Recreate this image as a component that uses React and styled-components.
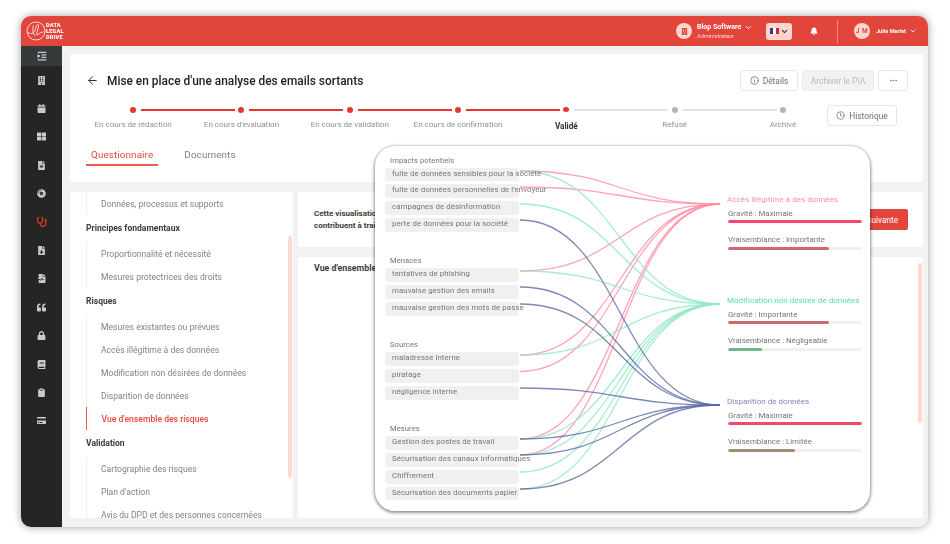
import React from 'react';
import styled, { createGlobalStyle } from 'styled-components';
import { ArrowLeft, ChevronDown, Info, Clock, MoreHorizontal } from 'lucide-react';
import {
  FaIndent, FaBuilding, FaCalendar, FaThLarge, FaFileAlt, FaCompactDisc, FaStethoscope,
  FaFileDownload, FaFileMedicalAlt, FaQuoteLeft, FaLock, FaBook, FaClipboard, FaCreditCard, FaBell,
} from 'react-icons/fa';

const Global = createGlobalStyle`
  html, body { margin: 0; padding: 0; background: #fff; }
  body { width: 950px; height: 544px; overflow: hidden; font-family: Roboto, "Liberation Sans", sans-serif; }
  * { box-sizing: border-box; }
`;

const Stage = styled.div`
  width: 950px; height: 544px; padding: 16px 22px 17px 21px; position: relative; filter: blur(0.35px);
`;
const Frame = styled.div`
  width: 907px; height: 511px; border-radius: 10px; overflow: hidden; display: flex; flex-direction: column;
  box-shadow: 0 0 9px rgba(0,0,0,.38); background: #f2f2f2;
`;
const Header = styled.header`
  height: 30px; flex: none; background: #e2453b; display: flex; align-items: center; padding: 0 11px 0 5px; color: #fff;
`;
const Logo = styled.div`display: flex; align-items: center;`;
const LogoText = styled.div`font-size: 5.6px; font-weight: 900; line-height: 6.2px; letter-spacing: .2px;`;
const HeadRight = styled.div`margin-left: auto; display: flex; align-items: center;`;
const Round = styled.div`
  width: 16px; height: 16px; border-radius: 50%; background: #ffd6cd; color: #e2453b; display: flex; align-items: center; justify-content: center;
  font-size: 6.5px; font-weight: 700; letter-spacing: .6px;
`;
const Org = styled.div`margin-left: 5px; width: 57px;`;
const OrgName = styled.div`font-size: 7px; font-weight: 700; display: flex; align-items: center; gap: 3px; line-height: 9px; white-space: nowrap;`;
const OrgRole = styled.div`font-size: 5.6px; line-height: 8px; color: #ffd6cd; white-space: nowrap;`;
const FlagBtn = styled.div`
  margin-left: 12px; width: 26px; height: 17px; border-radius: 3px; background: #ffd6cd; color: #333; display: flex; align-items: center; justify-content: center; gap: 1px;
`;
const BellBox = styled.div`margin-left: 18px; width: 10px; display: flex;`;
const Divider = styled.div`margin: 0 16px 0 17px; width: 1px; height: 23px; background: rgba(255,255,255,.35);`;
const UserName = styled.div`margin-left: 6px; font-size: 5.6px; font-weight: 700; display: flex; align-items: center; gap: 3px; white-space: nowrap;`;

const Body = styled.div`flex: 1; display: flex; min-height: 0;`;
const Side = styled.nav`width: 41px; flex: none; background: #252525; display: flex; flex-direction: column; align-items: stretch;`;
const SideTop = styled.div`height: 20px; background: #353a3a; color: #c7cace; display: flex; align-items: center; justify-content: center;`;
const SideItem = styled.div`
  height: 28.4px; display: flex; align-items: center; justify-content: center; color: ${p => (p.$active ? '#e2332c' : '#c7cace')};
`;

const Main = styled.main`flex: 1; min-width: 0; padding: 8px 5px 9px 8px; display: flex; flex-direction: column; gap: 10px;`;
const Card = styled.section`background: #fff; border-radius: 2px; position: relative;`;
const TopCard = styled(Card)`height: 128px; flex: none; padding: 16px 15px 0 16px; display: flex; flex-direction: column;`;
const TitleRow = styled.div`display: flex; align-items: center; height: 21px;`;
const Back = styled.div`width: 21px; color: #2e2e2e; display: flex;`;
const Title = styled.h1`margin: 0; font-size: 11.9px; font-weight: 500; color: #222; white-space: nowrap;`;
const Actions = styled.div`margin-left: auto; display: flex; gap: 4px;`;
const Btn = styled.div`
  height: 21px; border: 1px solid ${p => (p.$disabled ? '#ececec' : '#e6e6e6')}; border-radius: 3px; background: ${p => (p.$disabled ? '#f2f2f2' : '#fff')};
  color: ${p => (p.$disabled ? '#b9b9b9' : '#6e6e6e')}; font-size: 8.4px; font-weight: 400; display: flex; align-items: center; justify-content: center; gap: 4px; width: ${p => p.$w}px;
`;
const StepRow = styled.div`display: flex; align-items: flex-start; margin: 10px 0 0 -7px; height: 38px;`;
const Steps = styled.div`display: grid; grid-template-columns: repeat(7, 108.3px); width: 758px;`;
const Step = styled.div`display: flex; flex-direction: column; align-items: center; position: relative; height: 30px; padding-top: 6px;`;
const Dot = styled.div`width: 6px; height: 6px; border-radius: 50%; background: ${p => (p.$on ? '#e8352d' : '#b5b5b5')};`;
const Line = styled.div`
  position: absolute; left: calc(50% + 8px); top: 8px; width: 94px; height: 2px; background: ${p => (p.$on ? '#e8352d' : '#e4e4e4')};
`;
const StepLabel = styled.div`
  margin-top: ${p => (p.$cur ? 9 : 7)}px; font-size: ${p => (p.$cur ? 8.2 : 8)}px; font-weight: ${p => (p.$cur ? 700 : 400)}; color: ${p => (p.$cur ? '#333' : '#909090')}; white-space: nowrap;
`;
const HistoryBox = styled.div`margin: 4px 0 0 -10px;`;
const Tabs = styled.div`display: flex; margin-top: 6px; gap: 21px;`;
const Tab = styled.div`
  font-size: 9.9px; height: 21px; padding: 3.5px 5px 0; border-bottom: 2px solid ${p => (p.$on ? '#ee5a50' : 'transparent')}; color: ${p => (p.$on ? '#e8473c' : '#808080')}; letter-spacing: .1px;
`;

const Lower = styled.div`flex: 1; min-height: 0; display: flex; gap: 5px;`;
const NavCard = styled(Card)`width: 223px; flex: none; overflow: hidden; padding: 0 0 0 16px;`;
const NavGroup = styled.div`border-left: 1px solid #efefef; display: flex; flex-direction: column;`;
const NavItem = styled.div`
  height: 23px; display: flex; align-items: center; font-size: 8.6px; padding-left: ${p => (p.$on ? 14.5 : 14)}px; white-space: nowrap;
  color: ${p => (p.$on ? '#e8473c' : '#828282')}; font-weight: ${p => (p.$on ? 500 : 400)};
  ${p => p.$on && 'border-left: 1.5px solid #ee5a50; margin-left: -1px;'}
`;
const NavHead = styled.div`height: 25px; margin-bottom: 2.2px; display: flex; align-items: center; font-size: 8.55px; font-weight: 700; color: #3c3c3c;`;
const Scroll = styled.div`
  position: absolute; width: 4px; border-radius: 2px; background: #ffd9d0; right: ${p => p.$r}px; top: ${p => p.$t}px; height: ${p => p.$h}px;
`;
const RightCol = styled.div`flex: 1; display: flex; flex-direction: column; gap: 10px; min-width: 0;`;
const InfoCard = styled(Card)`height: 55px; flex: none; display: flex; align-items: center; padding: 0 15px 0 16px;`;
const InfoText = styled.div`font-size: 8px; font-weight: 700; color: #3c3c3c; line-height: 12px; white-space: nowrap;`;
const NextBtn = styled.div`
  margin-left: auto; width: 90px; height: 21px; background: #e2453b; border-radius: 2px; color: #fff; font-size: 8.2px; display: flex; align-items: center; justify-content: flex-end; padding-right: 10px;
`;
const OverCard = styled(Card)`flex: 1; padding: 6px 16px;`;
const OverTitle = styled.div`font-size: 8.8px; font-weight: 700; color: #3c3c3c;`;

const Popup = styled.div`
  position: absolute; left: 375px; top: 146px; width: 495px; height: 365px; background: #fff; border-radius: 20px;
  box-shadow: 0 1px 3px 1px rgba(0,0,0,.42); display: flex; padding: 9.500px 8px 0 10px; color: #757575;
`;
const Curves = styled.svg`position: absolute; left: 0; top: 0; pointer-events: none;`;
const Sources = styled.div`width: 134px; flex: none; display: flex; flex-direction: column; gap: 24.6px;`;
const SrcGroup = styled.div`display: flex; flex-direction: column; gap: 3px;`;
const SrcLabel = styled.div`font-size: 7.6px; height: 9px; line-height: 10px; padding-left: 5px; letter-spacing: .08px;`;
const SrcRow = styled.div`
  height: 13.8px; background: #f0f0f0; border-radius: 3px; padding-left: 7px; font-size: 7.8px; line-height: 12.5px; letter-spacing: .09px; white-space: nowrap; position: relative; z-index: 1;
`;
const Targets = styled.div`margin-left: 209px; width: 134px; flex: none; padding-top: 39px; display: flex; flex-direction: column; gap: 45.5px;`;
const Target = styled.div`display: flex; flex-direction: column;`;
const TargetName = styled.div`font-size: 8px; height: 10px; line-height: 10px; color: ${p => p.$c}; letter-spacing: .03px; white-space: nowrap; margin-left: -1px;`;
const Metric = styled.div`font-size: 7.9px; line-height: 10px; height: 10px; margin-top: ${p => p.$mt}px; white-space: nowrap;`;
const BarTrack = styled.div`height: 3px; margin-top: ${p => p.$mt}px; background: #f0f0f0; border-radius: 2px; overflow: hidden;`;
const BarFill = styled.div`height: 100%; border-radius: 2px; background: ${p => p.$c};`;

const steps = ['En cours de rédaction', "En cours d'évaluation", 'En cours de validation', 'En cours de confirmation', 'Validé', 'Refusé', 'Archivé'];
const sideIcons = [FaBuilding, FaCalendar, FaThLarge, FaFileAlt, FaCompactDisc, FaStethoscope, FaFileDownload, FaFileMedicalAlt, FaQuoteLeft, FaLock, FaBook, FaClipboard, FaCreditCard];
const nav = [
  { items: ['Données, processus et supports'] },
  { head: 'Principes fondamentaux', items: ['Proportionnalité et nécessité', 'Mesures protectrices des droits'] },
  { head: 'Risques', items: ['Mesures existantes ou prévues', 'Accès illégitime à des données', 'Modification non désirées de données', 'Disparition de données', "Vue d'ensemble des risques"] },
  { head: 'Validation', items: ['Cartographie des risques', "Plan d'action", 'Avis du DPD et des personnes concernées'] },
];
const srcGroups = [
  ['Impacts potentiels', ['fuite de données sensibles pour la société', "fuite de données personnelles de l'envoyeur", 'campagnes de désinformation', 'perte de données pour la société']],
  ['Menaces', ['tentatives de phishing', 'mauvaise gestion des emails', 'mauvaise gestion des mots de passe']],
  ['Sources', ['maladresse interne', 'piratage', 'négligence interne']],
  ['Mesures', ['Gestion des postes de travail', 'Sécurisation des canaux informatiques', 'Chiffrement', 'Sécurisation des documents papier']],
];
const targets = [
  { name: 'Accès illégitime à des données', c: '#ff8fa6', a: ['Gravité : Maximale', 100, '#f5476a'], b: ['Vraisemblance : Importante', 75, '#c96a6e'] },
  { name: 'Modification non désirée de données', c: '#4fe0a0', a: ['Gravité : Importante', 75, '#c96a6e'], b: ['Vraisemblance : Négligeable', 25, '#6fb886'] },
  { name: 'Disparition de données', c: '#7d87bd', a: ['Gravité : Maximale', 100, '#f5476a'], b: ['Vraisemblance : Limitée', 50, '#a08f75'] },
];
const RED = '#ff8da2', GREEN = '#8fe8c0', BLUE = '#5d6aa5';
const links = [
  [171, 204, RED], [187, 204, RED], [271, 204, RED], [355, 204, RED], [371.5, 204, RED], [439, 204, RED], [455, 204, RED],
  [171, 304, GREEN], [204, 304, GREEN], [271, 304, GREEN], [355, 304, GREEN], [439, 304, GREEN], [455, 304, GREEN], [472, 304, GREEN], [489, 304, GREEN],
  [220, 405, BLUE], [287, 405, BLUE], [304, 405, BLUE], [388, 405, BLUE], [439, 405, BLUE], [455, 405, BLUE], [489, 405, BLUE],
];

function LogoMark() {
  return (
    <svg width="20" height="20" viewBox="0 0 20 20" fill="none" stroke="#fff" strokeWidth="0.8">
      <circle cx="10" cy="10" r="9" />
      <path d="M2 11.500c3.500 2 6 1 7-2s1.500-6 3-6-1 8-1.500 9 0 2 1.500 1 3-2.500 5.500-2.500" />
      <path d="M7.500 4.500c-1 3.500-1 8 1.500 10.500" />
    </svg>
  );
}

function Flag() {
  return (
    <svg width="9" height="6" viewBox="0 0 9 6">
      <rect width="3" height="6" fill="#2b3f9e" />
      <rect x="3" width="3" height="6" fill="#fff" />
      <rect x="6" width="3" height="6" fill="#d8232f" />
    </svg>
  );
}

export default function App() {
  return (
    <Stage>
      <Global />
      <Frame>
        <Header>
          <Logo>
            <LogoMark />
            <LogoText>DATA<br />LEGAL<br />DRIVE</LogoText>
          </Logo>
          <HeadRight>
            <Round><FaBuilding size={7} /></Round>
            <Org>
              <OrgName>Blop Software <ChevronDown size={9} strokeWidth={2.4} /></OrgName>
              <OrgRole>Administrateur</OrgRole>
            </Org>
            <FlagBtn><Flag /><ChevronDown size={9} strokeWidth={3} /></FlagBtn>
            <BellBox><FaBell size={8} /></BellBox>
            <Divider />
            <Round>J M</Round>
            <UserName>Julie Merlet <ChevronDown size={8} strokeWidth={2.4} /></UserName>
          </HeadRight>
        </Header>
        <Body>
          <Side>
            <SideTop><FaIndent size={10} /></SideTop>
            {sideIcons.map((I, i) => (
              <SideItem key={i} $active={I === FaStethoscope}><I size={I === FaStethoscope ? 10 : 9} /></SideItem>
            ))}
          </Side>
          <Main>
            <TopCard>
              <TitleRow>
                <Back><ArrowLeft size={13} strokeWidth={1.8} /></Back>
                <Title>Mise en place d'une analyse des emails sortants</Title>
                <Actions>
                  <Btn $w={58}><Info size={9} />Détails</Btn>
                  <Btn $w={72} $disabled>Archiver le PIA</Btn>
                  <Btn $w={30}><MoreHorizontal size={9} /></Btn>
                </Actions>
              </TitleRow>
              <StepRow>
                <Steps>
                  {steps.map((s, i) => (
                    <Step key={s}>
                      <Dot $on={i < 5} />
                      {i < 6 && <Line $on={i < 4} />}
                      <StepLabel $cur={i === 4}>{s}</StepLabel>
                    </Step>
                  ))}
                </Steps>
                <HistoryBox><Btn $w={70}><Clock size={9} />Historique</Btn></HistoryBox>
              </StepRow>
              <Tabs>
                <Tab $on>Questionnaire</Tab>
                <Tab>Documents</Tab>
              </Tabs>
            </TopCard>
            <Lower>
              <NavCard>
                {nav.map((g, i) => (
                  <React.Fragment key={i}>
                    {g.head && <NavHead>{g.head}</NavHead>}
                    <NavGroup>
                      {g.items.map(t => <NavItem key={t} $on={t.startsWith('Vue')}>{t}</NavItem>)}
                    </NavGroup>
                  </React.Fragment>
                ))}
                <Scroll $r={1} $t={44} $h={242} />
              </NavCard>
              <RightCol>
                <InfoCard>
                  <InfoText>Cette visualisation<br />contribuent à trai</InfoText>
                  <NextBtn>suivante</NextBtn>
                </InfoCard>
                <OverCard>
                  <OverTitle>Vue d'ensemble</OverTitle>
                  <Scroll $r={1} $t={6} $h={160} />
                </OverCard>
              </RightCol>
            </Lower>
          </Main>
        </Body>
      </Frame>
      <Popup>
        <Sources>
          {srcGroups.map(([label, rows]) => (
            <SrcGroup key={label}>
              <SrcLabel>{label}</SrcLabel>
              {rows.map(r => <SrcRow key={r}>{r}</SrcRow>)}
            </SrcGroup>
          ))}
        </Sources>
        <Curves width="495" height="365" viewBox="375 146 495 365" fill="none">
          {links.map(([y1, y2, c], i) => (
            <path key={i} d={`M520 ${y1}C620 ${y1} 620 ${y2} 720 ${y2}`} stroke={c} strokeWidth="1.3" strokeOpacity=".8" />
          ))}
        </Curves>
        <Targets>
          {targets.map(t => (
            <Target key={t.name}>
              <TargetName $c={t.c}>{t.name}</TargetName>
              <Metric $mt={4}>{t.a[0]}</Metric>
              <BarTrack $mt={1.5}><BarFill $c={t.a[2]} style={{ width: `${t.a[1]}%` }} /></BarTrack>
              <Metric $mt={12}>{t.b[0]}</Metric>
              <BarTrack $mt={2}><BarFill $c={t.b[2]} style={{ width: `${t.b[1]}%` }} /></BarTrack>
            </Target>
          ))}
        </Targets>
      </Popup>
    </Stage>
  );
}
